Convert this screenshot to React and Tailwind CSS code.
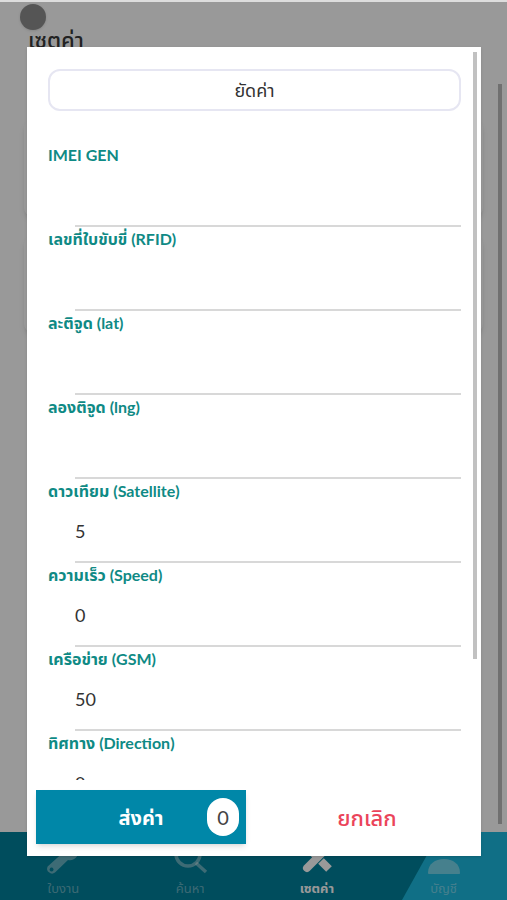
import React, { useState } from 'react';

const fields = [
  { id: 'imei', label: 'IMEI GEN', value: '' },
  { id: 'rfid', label: 'เลขที่ใบขับขี่ (RFID)', value: '' },
  { id: 'lat', label: 'ละติจูด (lat)', value: '' },
  { id: 'lng', label: 'ลองติจูด (lng)', value: '' },
  { id: 'satellite', label: 'ดาวเทียม (Satellite)', value: '5' },
  { id: 'speed', label: 'ความเร็ว (Speed)', value: '0' },
  { id: 'gsm', label: 'เครือข่าย (GSM)', value: '50' },
  { id: 'direction', label: 'ทิศทาง (Direction)', value: '0' },
];

function WrenchIcon() {
  return (
    <svg viewBox="0 0 36 36" className="w-9 h-9" aria-hidden="true">
      <path
        fill="currentColor"
        fillRule="evenodd"
        d="M2.600 26.400 17 13.600C15.600 7.500 20 1.600 27 2l-4 5 1 5 5 1 4.600-4.400C35 16 29 21.500 23 20L10 32.600a5 5 0 0 1-7.400-6.200ZM6.500 27.600a2 2 0 1 0 .1 0Z"
      />
    </svg>
  );
}

function SearchIcon() {
  return (
    <svg viewBox="0 0 36 36" className="w-9 h-9" fill="none" stroke="currentColor" aria-hidden="true">
      <circle cx="16" cy="14" r="12" strokeWidth="3.500" />
      <path d="m24 23 10 9" strokeWidth="3.500" />
    </svg>
  );
}

function ToolsIcon() {
  return (
    <svg viewBox="0 0 36 36" className="w-9 h-9" fill="none" stroke="currentColor" aria-hidden="true">
      <path d="M8 28 27 9" strokeWidth="8" strokeLinecap="round" />
      <path d="M6 8 19 20" strokeWidth="4" />
      <path d="m22 21 8 8" strokeWidth="8" />
    </svg>
  );
}

function UserIcon() {
  return (
    <svg viewBox="0 0 36 36" className="w-9 h-9" fill="currentColor" aria-hidden="true">
      <circle cx="18" cy="9" r="7" />
      <path d="M2 33c0-9 7-14 16-14s16 5 16 14c0 1-1 1-1 1H3s-1 0-1-1Z" />
    </svg>
  );
}

const tabs = [
  { label: 'ใบงาน', icon: WrenchIcon },
  { label: 'ค้นหา', icon: SearchIcon },
  { label: 'เซตค่า', icon: ToolsIcon, active: true },
  { label: 'บัญชี', icon: UserIcon },
];

function BottomNav() {
  return (
    <nav className="relative h-[68px] bg-[#00809b]">
      <div className="absolute inset-y-0 right-0 w-[105px] bg-[#1bbadf] [clip-path:polygon(36%_0,100%_0,100%_100%,0_100%)]"></div>
      <div className="relative grid grid-cols-4 h-full">
        {tabs.map(({ label, icon: Icon, active }) => (
          <a
            key={label}
            href="#"
            className={`flex flex-col items-center pt-2 text-[13px] ${active ? 'text-white font-bold' : 'text-white/40'}`}
          >
            <Icon />
            <span className="leading-6">{label}</span>
          </a>
        ))}
      </div>
    </nav>
  );
}

function SettingsPage() {
  return (
    <div className="h-full flex flex-col bg-white">
      <header className="pt-6 px-7">
        <h1 className="text-[22px] leading-8 font-medium text-[#3a3a3a]">เซตค่า</h1>
      </header>
      <main className="relative flex-1 px-6 pt-16 space-y-5">
        <div className="h-24 rounded-lg shadow-md"></div>
        <div className="h-24 rounded-lg shadow-md"></div>
        <div className="absolute top-7 bottom-2 right-[5px] w-1 bg-[#bbbbbb]"></div>
      </main>
      <BottomNav />
    </div>
  );
}

function Field({ id, label, value, onChange }) {
  return (
    <div>
      <label htmlFor={id} className="block h-7 text-base leading-6 font-bold text-[#0f8a85]">
        {label}
      </label>
      <div className="pl-[27px]">
        <input
          id={id}
          type="text"
          value={value}
          onChange={onChange}
          className="block w-full h-14 pb-1.5 border-b-2 border-[#d8d8d8] text-lg text-[#333333] outline-none"
        />
      </div>
    </div>
  );
}

function SendModal() {
  const [values, setValues] = useState(Object.fromEntries(fields.map((f) => [f.id, f.value])));

  const handleChange = (id) => (e) => {
    setValues({ ...values, [id]: e.target.value });
  };

  return (
    <div role="dialog" className="relative w-full h-full flex flex-col bg-white shadow-sm">
      <div className="flex-1 min-h-0 overflow-y-auto [scrollbar-width:none] pt-[22px] pl-[21px] pr-5">
        <button
          type="button"
          className="block w-full h-[42px] rounded-xl border-2 border-[#e6e6f2] text-lg text-[#333333]"
        >
          ยัดค่า
        </button>
        <form className="mt-8">
          {fields.map((field) => (
            <Field
              key={field.id}
              id={field.id}
              label={field.label}
              value={values[field.id]}
              onChange={handleChange(field.id)}
            />
          ))}
        </form>
      </div>
      {/* Scroll thumb */}
      <div className="absolute top-[5px] right-1 w-1 h-3/4 bg-[#c1c1c1]"></div>

      <div className="grid grid-cols-2 gap-4 pt-2.5 pb-3 pl-[9px] pr-[9px]">
        <button
          type="button"
          className="relative h-[54px] bg-[#0087a8] text-white text-xl font-bold shadow-md"
        >
          ส่งค่า
          <span className="absolute right-[7px] top-2 w-8 h-[38px] rounded-full bg-white text-[#444444] text-xl leading-[38px] font-normal">
            0
          </span>
        </button>
        <button type="button" className="h-[54px] text-[22px] font-medium text-[#eb445a]">
          ยกเลิก
        </button>
      </div>
    </div>
  );
}

function App() {
  return (
    <div className="relative h-screen overflow-hidden font-['Lato','Noto_Sans_Thai','Noto_Sans',sans-serif]">
      <SettingsPage />
      <div className="absolute inset-0 bg-black/40 border-t-2 border-[#dddddd] pt-[45px] pb-11 pl-[27px] pr-[26px]">
        <SendModal />
      </div>
      <div className="absolute top-1 left-5 w-[26px] h-[26px] rounded-full bg-[#555555] shadow-sm"></div>
    </div>
  );
}

export default App;
